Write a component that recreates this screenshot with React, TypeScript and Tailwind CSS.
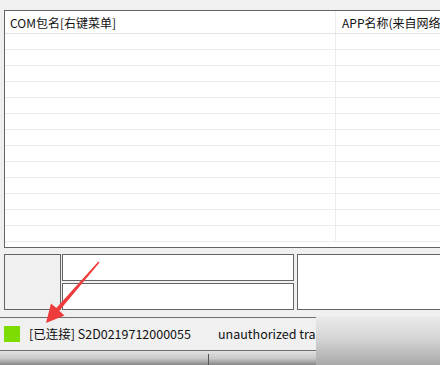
const rows = Array.from({ length: 12 });

export default function App() {
  return (
    <div
      className="relative w-[440px] h-[365px] overflow-hidden bg-[#f0f0f0] text-[#111]"
      style={{ fontFamily: '"Noto Sans CJK SC", "Liberation Sans", sans-serif' }}
    >
      {/* list */}
      <div className="pt-[10px] pl-[4px]">
        <div className="h-[238px] w-[460px] border-l border-t border-b border-[#646464] bg-white">
          <div className="flex h-[23px] border-b border-[#e3e3e3] text-[12px] leading-[23px]">
            <div className="w-[331px] shrink-0 border-r border-[#ececec] pl-[5px]">COM包名[右键菜单]</div>
            <div className="flex-1 whitespace-nowrap overflow-hidden pl-[6px]">APP名称(来自网络查询)</div>
          </div>
          <div className="h-[16px] flex border-b border-[#ececec]">
            <div className="w-[331px] shrink-0 border-r border-[#ececec]" />
          </div>
          {rows.map((_, i) => (
            <div key={i} className="h-[16px] flex border-b border-[#ececec]">
              <div className="w-[331px] shrink-0 border-r border-[#ececec]" />
            </div>
          ))}
        </div>
      </div>

      {/* panels */}
      <div className="mt-[6px] flex pl-[4px] h-[56px]">
        <div className="w-[57px] shrink-0 border border-[#646464] bg-[#f0f0f0]" />
        <div className="ml-[1px] w-[232px] shrink-0 flex flex-col gap-[2px]">
          <div className="h-[27px] border border-[#646464] bg-white" />
          <div className="h-[27px] border border-[#646464] bg-white" />
        </div>
        <div className="ml-[3px] w-[160px] shrink-0 border border-[#646464] bg-white" />
      </div>

      {/* status bar */}
      <div className="mt-[7px] h-[34px] border-t border-b border-[#6e6e6e] flex items-center text-[12.5px]">
        <div className="ml-[4px] w-[16px] h-[16px] shrink-0 bg-[#7fdc00]" />
        <span className="ml-[9px] w-[189px] shrink-0 whitespace-nowrap">[已连接] S2D0219712000055</span>
        <span className="whitespace-nowrap">unauthorized transport</span>
      </div>

      {/* bottom strip */}
      <div className="relative h-[15px] bg-gradient-to-b from-[#e2e2e2] via-[#c8c8c8] to-[#7d7d7d]">
        <div className="absolute left-[208px] top-[3px] h-[12px] w-px bg-[#555]" />
      </div>

      {/* overlapping window corner */}
      <div className="absolute left-[316px] top-[316px] w-[124px] h-[49px] bg-gradient-to-b from-[#ebebeb] via-[#d2d2d2] to-[#a9a9a9]" />

      {/* red arrow */}
      <svg className="absolute left-0 top-0" width="440" height="365" viewBox="0 0 440 365">
        <polygon
          points="98.4,261.6 56.3,308.1 51,303.6 46,323 64.5,315.5 59.3,310.7 99.6,262.4"
          fill="#ee3b3b"
        />
      </svg>
    </div>
  );
}
